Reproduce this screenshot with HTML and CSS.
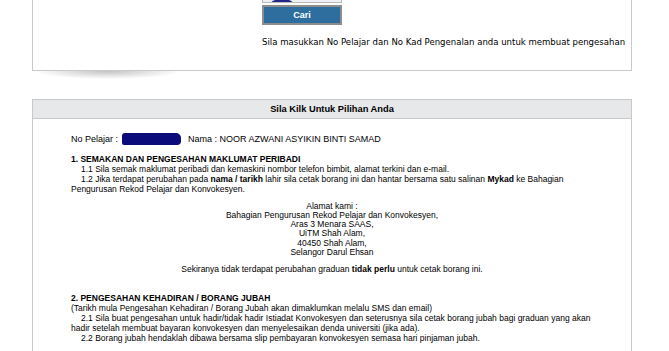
FILE: index.html
```html
<!DOCTYPE html>
<html>
<head>
<meta charset="utf-8"/>
<title>Pengesahan Konvokesyen</title>
<link rel="stylesheet" href="styles.css">
</head>
<body>
<main class="page">

<div class="panel search">
	<div class="search-form">
		<div class="captcha"><span class="captcha-mark"></span></div>
		<button class="btn-cari" type="button">Cari</button>
		<p class="hint">Sila masukkan No Pelajar dan No Kad Pengenalan anda untuk membuat pengesahan</p>
	</div>
</div>

<div class="panel choices">
	<div class="panel-head">Sila Kilk Untuk Pilihan Anda</div>
	<div class="panel-body">
		<p class="ident">No Pelajar : <span class="redacted"></span> Nama : NOOR AZWANI ASYIKIN BINTI SAMAD</p>

		<h3 class="sec-title">1. SEMAKAN DAN PENGESAHAN MAKLUMAT PERIBADI</h3>
		<p class="item">1.1 Sila semak maklumat peribadi dan kemaskini nombor telefon bimbit, alamat terkini dan e-mail.</p>
		<p class="item">1.2 Jika terdapat perubahan pada <b>nama / tarikh</b> lahir sila cetak borang ini dan hantar bersama satu salinan <b>Mykad</b> ke Bahagian<br>Pengurusan Rekod Pelajar dan Konvokesyen.</p>

		<p class="address">
			Alamat kami :<br>
			Bahagian Pengurusan Rekod Pelajar dan Konvokesyen,<br>
			Aras 3 Menara SAAS,<br>
			UiTM Shah Alam,<br>
			40450 Shah Alam,<br>
			Selangor Darul Ehsan
		</p>

		<p class="note">Sekiranya tidak terdapat perubahan graduan <b>tidak perlu</b> untuk cetak borang ini.</p>

		<h3 class="sec-title sec-two">2. PENGESAHAN KEHADIRAN / BORANG JUBAH</h3>
		<p>(Tarikh mula Pengesahan Kehadiran / Borang Jubah akan dimaklumkan melalu SMS dan email)</p>
		<p class="item">2.1 Sila buat pengesahan untuk hadir/tidak hadir Istiadat Konvokesyen dan seterusnya sila cetak borang jubah bagi graduan yang akan hadir setelah membuat bayaran konvokesyen dan menyelesaikan denda universiti (jika ada).</p>
		<p class="item">2.2 Borang jubah hendaklah dibawa bersama slip pembayaran konvokesyen semasa hari pinjaman jubah.</p>
	</div>
</div>

</main>
</body>
</html>
```

FILE: styles.css
```css
body {
	margin: 0;
	background-color: #ffffff;
	font-family: "Liberation Sans", Arial, sans-serif;
	color: #000;
}
.page {
	width: 600px;
	margin: -40px 0 0 32px;
}
.panel {
	border: 1px solid #c9c9c9;
	background-color: #fff;
}

/* search box (top) */
.search {
	position: relative;
	padding: 8px 0 23px 229px;
}
.search::after {
	content: "";
	position: absolute;
	left: 2px;
	top: 100%;
	margin-top: 1px;
	width: 145px;
	height: 8px;
	background: radial-gradient(ellipse at 50% 0%, rgba(0,0,0,0.24), rgba(0,0,0,0) 72%);
}
.captcha {
	width: 78px;
	height: 32px;
	border: 1px solid #b9b9b9;
	background-color: #eef0f3;
	overflow: hidden;
	position: relative;
}
.captcha-mark {
	position: absolute;
	left: 8px;
	bottom: -6px;
	width: 22px;
	height: 9px;
	border-radius: 50%;
	background-color: #22268a;
}
.btn-cari {
	display: block;
	margin-top: 2px;
	width: 80px;
	height: 20px;
	padding: 0;
	border: 2px solid #8d8d8d;
	background-color: #2d6e9f;
	color: #fff;
	font-family: "Liberation Sans", Arial, sans-serif;
	font-weight: bold;
	font-size: 9px;
}
.hint {
	margin: 12px 0 0;
	font-family: "DejaVu Sans", Tahoma, sans-serif;
	font-size: 8.55px;
	line-height: 10px;
	white-space: nowrap;
}

/* choices panel */
.choices {
	margin-top: 28px;
	border-bottom: none;
}
.panel-head {
	height: 18px;
	line-height: 18px;
	text-align: center;
	font-weight: bold;
	font-size: 9.3px;
	background-color: #e6e8ea;
	border-bottom: 1px solid #c9c9c9;
}
.panel-body {
	padding: 14px 38px 20px 38px;
	font-size: 8.5px;
	line-height: 10px;
}
.panel-body p {
	margin: 0;
}
.ident {
	font-size: 9px;
	line-height: 12px;
}
.redacted {
	display: inline-block;
	width: 59px;
	height: 12px;
	margin: 0 5px 0 1px;
	vertical-align: -3px;
	background-color: #0b0b7c;
	border-radius: 3px 5px 4px 2px;
}
.sec-title {
	margin: 9px 0 0;
	font-size: 8.5px;
	line-height: 10px;
}
.item {
	text-indent: 10px;
}
.address {
	margin-top: 7.5px !important;
	text-align: center;
	line-height: 9.3px;
}
.note {
	margin-top: 6.5px !important;
	text-align: center;
}
.sec-two {
	margin-top: 19px;
}
```
